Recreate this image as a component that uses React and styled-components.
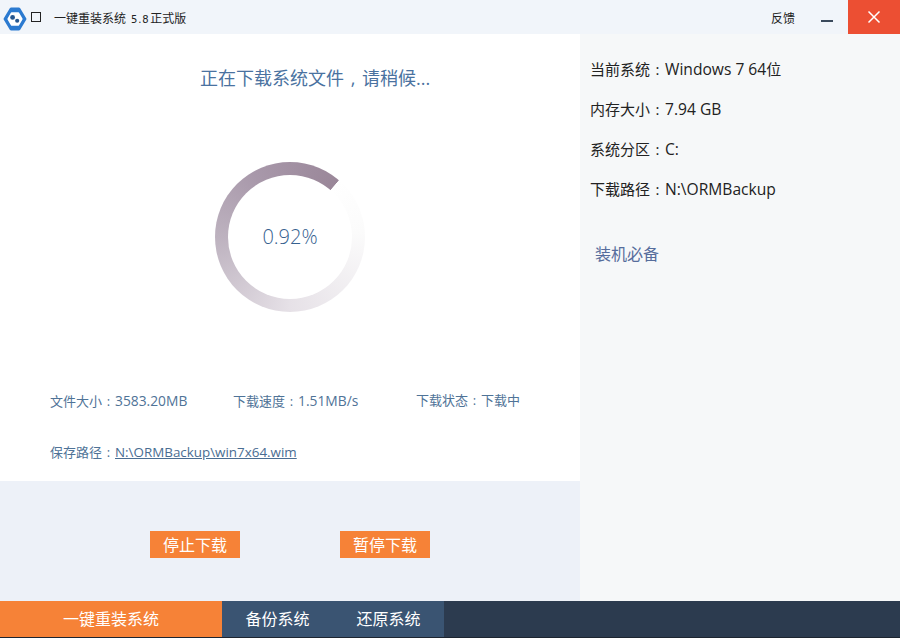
import React from "react";
import styled, { createGlobalStyle } from "styled-components";

const GlobalStyle = createGlobalStyle`
  html, body {
    margin: 0;
    padding: 0;
    background: #fff;
  }
  body {
    font-family: "Open Sans", "Noto Sans CJK SC", sans-serif;
  }
`;

// Window frame
const Win = styled.div`
  width: 900px;
  height: 638px;
  display: flex;
  flex-direction: column;
  overflow: hidden;
`;

const TitleBar = styled.div`
  height: 34px;
  flex: none;
  display: flex;
  align-items: center;
  background: #f1f5fa;
`;

const Logo = styled.svg`
  width: 24px;
  height: 24px;
  margin: 3px 0 0 3px;
  flex: none;
`;

const SquareBtn = styled.span`
  width: 8px;
  height: 8px;
  margin-left: 4px;
  border: 1px solid #222;
  flex: none;
`;

const AppTitle = styled.span`
  margin-left: 13px;
  font-family: "Noto Sans CJK SC", sans-serif;
  font-size: 12px;
  color: #222;
  white-space: nowrap;
`;

const Version = styled.span`
  font-family: "DejaVu Sans", sans-serif;
  font-size: 10px;
  margin: 0 1px 0 5px;
  letter-spacing: 0.8px;
`;

const TitleRight = styled.div`
  margin-left: auto;
  display: flex;
  align-items: center;
  height: 100%;
`;

const Feedback = styled.a`
  font-family: "Noto Sans CJK SC", sans-serif;
  font-size: 12px;
  color: #222;
  margin-right: 26px;
`;

const MinBtn = styled.span`
  width: 12px;
  height: 2px;
  background: #3a4a5c;
  margin-top: 7px;
  margin-right: 15px;
`;

const CloseBtn = styled.div`
  width: 52px;
  height: 34px;
  background: #ec4f33;
  display: flex;
  align-items: center;
  justify-content: center;
`;

const Body = styled.div`
  flex: 1;
  display: flex;
  min-height: 0;
`;

// Left download panel
const Left = styled.div`
  width: 580px;
  flex: none;
  display: flex;
  flex-direction: column;
  background: #fff;
`;

const Progress = styled.div`
  height: 447px;
  flex: none;
  display: flex;
  flex-direction: column;
  box-sizing: border-box;
  padding-top: 30px;
`;

const Heading = styled.h2`
  margin: 0;
  padding-left: 200px;
  font-size: 18px;
  line-height: 28px;
  font-weight: 400;
  color: #4a72a0;
`;

// fullwidth punctuation sits centred in its cell in the original font
const Punct = styled.span`
  display: inline-block;
  width: 1em;
  text-align: center;
`;

const Ring = styled.div`
  width: 150px;
  height: 150px;
  margin: 70px auto 0 215px;
  border-radius: 50%;
  display: flex;
  align-items: center;
  justify-content: center;
  background: conic-gradient(
    from 41deg,
    #ffffff 0deg,
    #fbfbfb 45deg,
    #e6e1e7 139deg,
    #bdb2bf 229deg,
    #a898aa 290deg,
    #9a8799 359.5deg,
    #ffffff 360deg
  );
`;

const RingHole = styled.div`
  width: 124px;
  height: 124px;
  border-radius: 50%;
  background: #fff;
  display: flex;
  align-items: center;
  justify-content: center;
  font-size: 20px;
  font-weight: 300;
  color: #36618f;
  padding-bottom: 1px;
  box-sizing: border-box;
`;

const Stats = styled.div`
  margin-top: 78px;
  padding-left: 50px;
  display: grid;
  grid-template-columns: 183px 183px auto;
  row-gap: 30px;
  font-size: 13px;
  line-height: 21px;
  color: #4f7397;
`;

const StatValue = styled.span`
  font-size: 13.8px;
`;

const PathRow = styled.div`
  grid-column: 1 / -1;
`;

const PathLink = styled.a`
  color: #4a6d92;
  text-decoration: underline;
  font-size: 13.4px;
`;

const Actions = styled.div`
  flex: 1;
  background: #edf1f8;
  display: flex;
  gap: 100px;
  padding: 50px 0 0 150px;
  align-items: flex-start;
`;

const ActionBtn = styled.button`
  width: 90px;
  height: 27px;
  border: none;
  padding: 0 0 2px;
  background: #f68237;
  color: #fff;
  font-family: inherit;
  font-size: 16px;
  cursor: pointer;
`;

// Right system info panel
const Side = styled.div`
  flex: 1;
  background: #f6f8f9;
  padding: 25px 0 0 10px;
  display: flex;
  flex-direction: column;
`;

const InfoRow = styled.div`
  height: 40px;
  font-size: 15px;
  line-height: 21px;
  color: #222;
`;

const InfoValue = styled.span`
  font-size: 15.6px;
`;

const SideLink = styled.a`
  margin: 24px 0 0 5px;
  font-size: 16px;
  line-height: 22px;
  color: #566d9c;
`;

// Bottom tabs
const Footer = styled.div`
  height: 37px;
  flex: none;
  display: flex;
  background: #2c3b4f;
  border-bottom: 1px solid #1d2530;
  box-sizing: border-box;
`;

const Tab = styled.div`
  width: ${(p) => p.$w}px;
  padding-bottom: 2px;
  box-sizing: border-box;
  display: flex;
  align-items: center;
  justify-content: center;
  font-size: 16px;
  color: #fff;
  background: ${(p) => p.$bg};
`;

const TabGroup = styled.div`
  width: 222px;
  display: flex;
  background: #3a5472;
`;

const stats = [
  ["文件大小", "3583.20MB"],
  ["下载速度", "1.51MB/s"],
];

const info = [
  ["当前系统", "Windows 7 64", "位"],
  ["内存大小", "7.94 GB"],
  ["系统分区", "C:"],
  ["下载路径", "N:\\ORMBackup"],
];

export default function App() {
  return (
    <Win>
      <GlobalStyle />
      <TitleBar>
        <Logo viewBox="0 0 22 22">
          <path
            d="M7.500 2h7L20 11l-5.500 9h-7L2 11z"
            fill="#2b7ad0"
            stroke="#2b7ad0"
            strokeWidth="3"
            strokeLinejoin="round"
          />
          <path
            d="M8 5.500h6l3.200 5.500L14 16.500H8L4.800 11z"
            fill="#fff"
            stroke="#fff"
            strokeWidth="1.500"
            strokeLinejoin="round"
          />
          <circle cx="8.800" cy="9.600" r="2.200" fill="#25568f" />
          <circle cx="13" cy="12.600" r="1.900" fill="#25568f" />
        </Logo>
        <SquareBtn />
        <AppTitle>
          一键重装系统<Version>5.8</Version>正式版
        </AppTitle>
        <TitleRight>
          <Feedback>反馈</Feedback>
          <MinBtn />
          <CloseBtn>
            <svg width="14" height="14" viewBox="0 0 14 14">
              <path d="M1.500 1.500l11 11M12.500 1.500l-11 11" stroke="#fff" strokeWidth="1.500" />
            </svg>
          </CloseBtn>
        </TitleRight>
      </TitleBar>
      <Body>
        <Left>
          <Progress>
            <Heading>
              正在下载系统文件<Punct>,</Punct>请稍候...
            </Heading>
            <Ring>
              <RingHole>0.92%</RingHole>
            </Ring>
            <Stats>
              {stats.map(([k, v]) => (
                <div key={k}>
                  {k}
                  <Punct>:</Punct>
                  <StatValue>{v}</StatValue>
                </div>
              ))}
              <div>
                下载状态<Punct>:</Punct>下载中
              </div>
              <PathRow>
                保存路径<Punct>:</Punct>
                <PathLink href="#">N:\ORMBackup\win7x64.wim</PathLink>
              </PathRow>
            </Stats>
          </Progress>
          <Actions>
            <ActionBtn>停止下载</ActionBtn>
            <ActionBtn>暂停下载</ActionBtn>
          </Actions>
        </Left>
        <Side>
          {info.map(([k, v, tail]) => (
            <InfoRow key={k}>
              {k}
              <Punct>:</Punct>
              <InfoValue>{v}</InfoValue>
              {tail}
            </InfoRow>
          ))}
          <SideLink>装机必备</SideLink>
        </Side>
      </Body>
      <Footer>
        <Tab $w={222} $bg="#f68237">一键重装系统</Tab>
        <TabGroup>
          <Tab $w={111}>备份系统</Tab>
          <Tab $w={111}>还原系统</Tab>
        </TabGroup>
      </Footer>
    </Win>
  );
}
